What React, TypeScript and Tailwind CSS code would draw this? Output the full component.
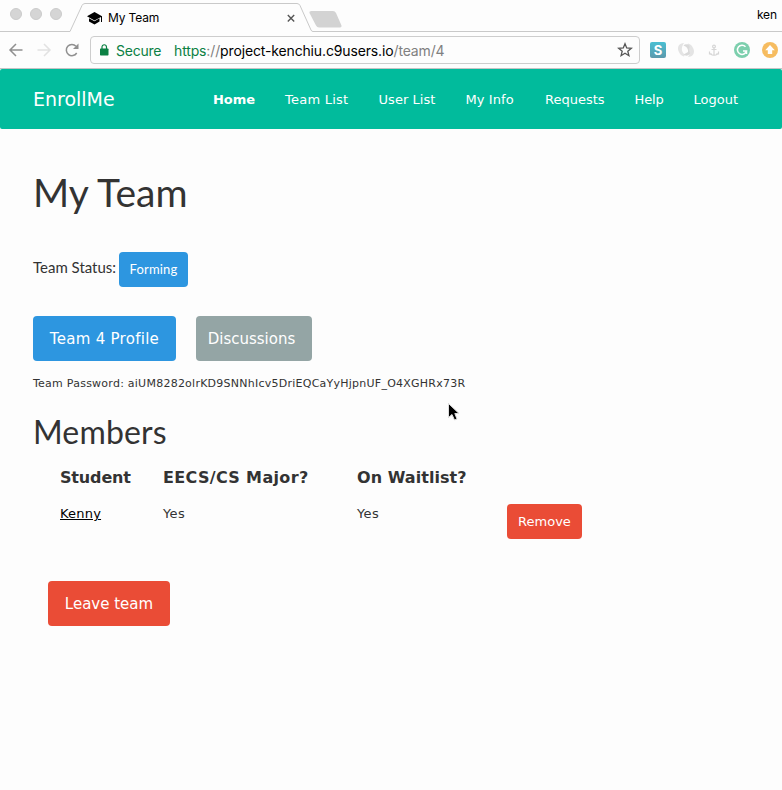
import type { ReactNode } from "react";

const verdana = "font-['Verdana','DejaVu_Sans',sans-serif]";
const lato = "font-['Lato',sans-serif]";

function TabStrip() {
  return (
    <div className="relative h-8 w-full">
      <svg className="absolute inset-0" width="782" height="32" viewBox="0 0 782 32" fill="none">
        <path d="M0 31.5H70L82 5.500Q83 3.500 85 3.500H297Q299 3.500 300 5.500L311 30Q311.600 31.500 313 31.500H782" stroke="#c9c9c9" />
        <path d="M311.500 11H333Q335 11 336 13L341.500 25.500Q342 27.500 340 27.500H319Q317 27.500 316 25.500L309.500 13Q309 11 311.500 11Z" fill="#d3d3d3" />
        <g fill="#d5d5d5" stroke="#cbcbcb">
          <circle cx="16" cy="14" r="5.500" />
          <circle cx="36" cy="14" r="5.500" />
          <circle cx="56" cy="14" r="5.500" />
        </g>
        <path d="M94.500 12L87 16.200L94.500 20.500L101 17V22H102V16.200Z" fill="#000" />
        <path d="M89 18.200V21.400L94.500 24.500L99.500 21.400V18.200L94.500 21.200Z" fill="#000" />
        <path d="M287.800 15L294.200 21.400M294.200 15L287.800 21.400" stroke="#555" strokeWidth="1.400" />
      </svg>
      <div className="flex h-8 justify-between pt-[9px] pl-[108px] pr-[5px] text-[12px] leading-[17px] text-black">
        <span className="tracking-[-0.15px]">My Team</span>
        <span className="-mt-[3px] tracking-[-0.1px]">ken</span>
      </div>
    </div>
  );
}

function Toolbar() {
  return (
    <div className="flex h-[37px] items-start border-b border-[#c4c4c4] pt-1">
      <svg className="mt-px shrink-0" width="90" height="26" viewBox="0 0 90 26" fill="none" strokeWidth="1.500">
        <path d="M22.500 13H10.500M16 7L10 13L16 19" stroke="#909090" />
        <path d="M37.500 13H49.500M44 7L50 13L44 19" stroke="#e2e2e2" />
        <path d="M76.700 16A5.600 5.600 0 1 1 76 9.200" stroke="#909090" />
        <path d="M78.500 6.500V12H73Z" fill="#909090" />
      </svg>
      <div className="flex h-[28px] w-[550px] shrink-0 items-center rounded-[4px] border border-[#cdcdcd] pl-[9px] pr-[6px] text-[14px]">
        <svg width="9" height="12" viewBox="0 0 9 12" fill="none">
          <rect y="4.500" width="8.500" height="7" rx="0.700" fill="#0b8043" />
          <path d="M2 5V3A2.250 2.250 0 0 1 6.500 3V5" stroke="#0b8043" strokeWidth="1.200" />
        </svg>
        <span className="ml-[7px] w-[58px] whitespace-nowrap tracking-[-0.25px] text-[#0b8043]">Secure</span>
        <span className="grow whitespace-nowrap tracking-[-0.14px] text-[#808080]">
          <span className="text-[#0b8043]">https</span>://<span className="text-black">project-kenchiu.c9users.io</span>/team/4
        </span>
        <svg width="16" height="16" viewBox="0 0 16 16" fill="none" stroke="#555" strokeWidth="1.300">
          <path d="M8 1.800L9.700 6L14.300 6.300L10.800 9.200L11.900 13.700L8 11.200L4.100 13.700L5.200 9.200L1.700 6.300L6.300 6Z" />
        </svg>
      </div>
      <svg className="mt-px shrink-0" width="142" height="26" viewBox="640 37 142 26" fill="none">
        <defs>
          <linearGradient id="badge" x1="0" y1="0" x2="0" y2="1">
            <stop stopColor="#49bfd2" />
            <stop offset="1" stopColor="#5c99ac" />
          </linearGradient>
        </defs>
        <rect x="650" y="42" width="16" height="16" rx="2" fill="url(#badge)" />
        <text x="657.900" y="54.800" textAnchor="middle" fill="#fff" fontFamily="Inter" fontWeight="700" fontSize="13">S</text>
        <path d="M684 43C679 43 677 47 678.500 51C679.500 54 681.500 56 684 56.500L685 54.500C681 52 681 47 684 43Z" fill="#e4e4e4" />
        <path d="M688 57C693 57 695 53 693.500 49C692.500 46 690.500 44 688 43.500L687 45.500C691 48 691 53 688 57Z" fill="#e4e4e4" />
        <path d="M683.500 45.500Q686 43 689.500 45.500L690 54Q686.500 57 683.500 54.500L688 52Q688.500 48.500 685.500 46.500Z" fill="#d9d9d9" />
        <g stroke="#d6d6d6" strokeWidth="1.200">
          <circle cx="714" cy="46.500" r="1.400" />
          <path d="M714 48V55M711.500 49.500H716.500M709.500 51.500V54H712M718.500 51.500V54H716M709.500 53Q711 55.500 714 55Q717 55.500 718.500 53" />
        </g>
        <circle cx="742" cy="50" r="8" fill="#7ccfad" />
        <path d="M745.500 46.700A4.600 4.600 0 1 0 746.500 51H743M746.500 51V54" stroke="#fff" strokeWidth="1.500" />
        <circle cx="770" cy="50" r="8" fill="#f6bc60" />
        <path d="M770 45L774.800 50.200H772.200V54H767.800V50.200H765.200Z" fill="#fff" />
      </svg>
    </div>
  );
}

function NavBar() {
  return (
    <nav className={`flex h-[60px] items-center whitespace-nowrap rounded-[2px] bg-[#01bb9c] pt-px pl-[33px] text-[13px] text-white ${verdana}`}>
      <span className="w-[180px] text-[19px]">EnrollMe</span>
      <span className="w-[72px] font-bold tracking-[-0.05px]">Home</span>
      <span className="w-[93.500px] tracking-[0.25px]">Team List</span>
      <span className="w-[87px] tracking-[0.05px]">User List</span>
      <span className="w-[79.500px] tracking-[0.1px]">My Info</span>
      <span className="w-[89.500px] tracking-[0px]">Requests</span>
      <span className="w-[59px] tracking-[-0.1px]">Help</span>
      <span>Logout</span>
    </nav>
  );
}

function Button({ className, children }: { className: string; children: ReactNode }) {
  return (
    <button className={`flex items-center justify-center whitespace-nowrap rounded-[4px] text-white ${className}`}>
      {children}
    </button>
  );
}

function Members() {
  return (
    <div className="ml-[27px] grid grid-cols-[103px_194px_150px_75px] whitespace-nowrap text-[13px] leading-5">
      <span className="h-[36px] text-[16px] font-bold tracking-[-0.15px]">Student</span>
      <span className="text-[16px] font-bold tracking-[0.34px]">EECS/CS Major?</span>
      <span className="text-[16px] font-bold tracking-[0.05px]">On Waitlist?</span>
      <span />
      <a className="tracking-[0.2px] text-black underline">Kenny</a>
      <span className="tracking-[0.4px]">Yes</span>
      <span className="tracking-[0.4px]">Yes</span>
      <Button className="h-[35px] w-[75px] rounded-[3px] bg-[#ea4c36]">Remove</Button>
    </div>
  );
}

export default function App() {
  return (
    <div className="h-[790px] w-[782px] overflow-hidden bg-[#fdfdfd] font-['Inter',sans-serif]">
      <TabStrip />
      <Toolbar />
      <NavBar />
      <main className={`relative pl-[33px] text-[#333] ${verdana}`}>
        <h1 className={`pt-[38px] text-[39px] leading-[50px] tracking-[0.1px] ${lato}`}>My Team</h1>
        <div className={`mt-[35px] flex h-[35px] text-[15px] ${lato}`}>
          <span className="w-[86px] whitespace-nowrap leading-[31px]">Team Status:</span>
          <Button className="w-[69px] rounded-[3px] bg-[#2d96e0] text-[13px] tracking-[0.15px]">Forming</Button>
        </div>
        <div className="mt-[29px] flex h-[45px] gap-5 text-[15px]">
          <Button className="w-[143px] bg-[#2d96e0] pt-[2px] tracking-[0.28px]">Team 4 Profile</Button>
          <Button className="w-[116px] bg-[#94a5a5] pt-[2px] pr-[5px]">Discussions</Button>
        </div>
        <p className="mt-[14px] whitespace-nowrap text-[11px] leading-[18px] tracking-[0.245px]">
          Team Password: aiUM8282olrKD9SNNhIcv5DriEQCaYyHjpnUF_O4XGHRx73R
        </p>
        <h2 className={`mt-[19px] text-[32px] leading-[40px] tracking-[0.15px] ${lato}`}>Members</h2>
        <div className="mt-[16px]">
          <Members />
        </div>
        <Button className="mt-[42px] ml-[15px] h-[45px] w-[122px] bg-[#ea4c36] pt-[2px] text-[15px]">Leave team</Button>
        <svg className="absolute top-[273px] left-[447px]" width="16" height="22" viewBox="0 0 16 22">
          <path d="M1.500 1.500V15.500L5 12.500L7.500 18L10 17L7.800 11.500H12Z" fill="#000" stroke="#ddd" strokeWidth="1" />
        </svg>
      </main>
    </div>
  );
}
